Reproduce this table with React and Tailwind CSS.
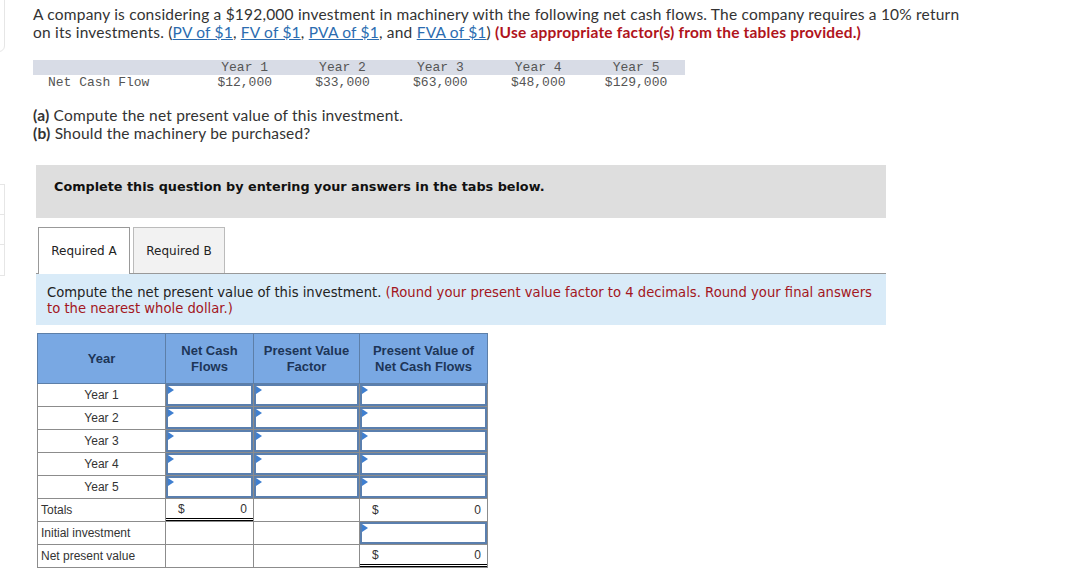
import React from "react";

const sans = { fontFamily: "Lato, 'Open Sans', sans-serif" };
const verdana = { fontFamily: "'DejaVu Sans', Verdana, sans-serif" };
const arial = { fontFamily: "'Liberation Sans', Arial, sans-serif" };
const mono = { fontFamily: "'Liberation Mono', 'Courier New', monospace" };

function Tri() {
  return (
    <span className="absolute left-0 top-0 w-0 h-0 border-t-[4px] border-b-[4px] border-l-[6px] border-t-transparent border-b-transparent border-l-[#3f7fd0]" />
  );
}

function InputCell() {
  return (
    <td className="p-0 border border-[#8c8c8c]">
      <div className="relative h-[22px] border-2 border-[#5a7fae] bg-white">
        <Tri />
      </div>
    </td>
  );
}

function DollarCell({ double }) {
  return (
    <td className="p-0 border border-[#8c8c8c]">
      <div
        className={
          "flex h-[22px] items-center justify-between pl-[12px] pr-[6px] text-[12px] text-[#333] " +
          (double ? "border-b-[3px] border-double border-b-black" : "")
        }
      >
        <span>$</span>
        <span>0</span>
      </div>
    </td>
  );
}

function Cell({ children, className = "" }) {
  return (
    <td className={"p-0 border border-[#8c8c8c] " + className}>
      <div className="h-[22px] flex items-center">{children}</div>
    </td>
  );
}

export default function App() {
  const years = ["Year 1", "Year 2", "Year 3", "Year 4", "Year 5"];
  const flows = ["$12,000", "$33,000", "$63,000", "$48,000", "$129,000"];
  return (
    <div className="relative w-[1070px] h-[573px] overflow-hidden bg-white">
      {/* faint sidebar fragments at left edge */}
      <div className="absolute left-[-10px] top-[-10px] w-[15px] h-[62px] border border-[#e6e6e6] rounded-br-[6px]" />
      <div className="absolute left-[-10px] top-[184px] w-[15px] h-[92px] border border-[#e6e6e6] flex flex-col">
        <div className="h-[30px] border-b border-[#e6e6e6]" />
        <div className="h-[30px] border-b border-[#e6e6e6]" />
        <div className="h-[30px]" />
      </div>

      <div className="pl-[33px] pt-[5px]">
        <p className="text-[15.5px] leading-[18px] text-[#333] tracking-[0.2px]" style={sans}>
          A company is considering a $192,000 investment in machinery with the following net cash flows. The company requires a 10% return
          <br />
          on its investments. (
          <a className="text-[#2b6cb0] underline">PV of $1</a>,{" "}
          <a className="text-[#2b6cb0] underline">FV of $1</a>,{" "}
          <a className="text-[#2b6cb0] underline">PVA of $1</a>, and{" "}
          <a className="text-[#2b6cb0] underline">FVA of $1</a>){" "}
          <span className="font-bold text-[#b0141c]">(Use appropriate factor(s) from the tables provided.)</span>
        </p>

        {/* Net cash flow table */}
        <div className="mt-[19px] w-[652px] text-[13px] text-[#555]" style={mono}>
          <div className="flex h-[15px] items-center bg-[#d8dce6]">
            <div className="w-[163px]" />
            {years.map((y) => (
              <div key={y} className="w-[98px] text-center">{y}</div>
            ))}
          </div>
          <div className="flex h-[15px] items-center pt-[1px]">
            <div className="w-[163px] pl-[15px]">Net Cash Flow</div>
            {flows.map((f) => (
              <div key={f} className="w-[98px] text-center">{f}</div>
            ))}
          </div>
        </div>

        <div className="mt-[17px] text-[15.5px] leading-[17px] text-[#333] tracking-[0.2px]" style={sans}>
          <div><span className="font-bold">(a)</span> Compute the net present value of this investment.</div>
          <div className="mt-[1px]"><span className="font-bold">(b)</span> Should the machinery be purchased?</div>
        </div>

        {/* Instruction box */}
        <div className="mt-[23px] ml-[3px] w-[850px] h-[53px] bg-[#dedede] pl-[18px] pt-[14px]">
          <div className="font-bold text-[12.8px] leading-[16px] text-[#111]" style={verdana}>
            Complete this question by entering your answers in the tabs below.
          </div>
        </div>

        {/* Tabs */}
        <div className="mt-[9px] ml-[5px] flex gap-[3px] h-[46px]" style={verdana}>
          <div className="w-[92px] h-[47px] border border-[#999] border-b-0 bg-white flex items-center justify-center text-[12px] text-[#222] relative z-10">
            Required A
          </div>
          <div className="w-[92px] h-[46px] border border-[#bbb] border-b-0 bg-[#f2f2f2] flex items-center justify-center text-[12px] text-[#222]">
            Required B
          </div>
        </div>

        {/* Blue panel */}
        <div className="ml-[3px] w-[850px] h-[52px] bg-[#d9ebf8] border-t border-[#999] pl-[11px] pr-[8px] pt-[11px] text-[13.2px] leading-[16px] text-[#222]" style={verdana}>
          Compute the net present value of this investment.{" "}
          <span className="text-[#a31621]">
            (Round your present value factor to 4 decimals. Round your final answers to the nearest whole dollar.)
          </span>
        </div>

        {/* NPV table */}
        <table className="mt-[8px] ml-[4px] border-collapse table-fixed w-[450px] text-[12px] text-[#333]" style={arial}>
          <colgroup>
            <col className="w-[128px]" />
            <col className="w-[88px]" />
            <col className="w-[106px]" />
            <col className="w-[128px]" />
          </colgroup>
          <thead>
            <tr className="h-[50px] bg-[#79a8e3] text-[#1d3557] font-bold text-[13px] leading-[16px]">
              <th className="border border-[#5d7fa8] font-bold">Year</th>
              <th className="border border-[#5d7fa8] font-bold">Net Cash<br />Flows</th>
              <th className="border border-[#5d7fa8] font-bold">Present Value<br />Factor</th>
              <th className="border border-[#5d7fa8] font-bold">Present Value of<br />Net Cash Flows</th>
            </tr>
          </thead>
          <tbody>
            {years.map((y) => (
              <tr key={y}>
                <Cell><span className="w-full text-center">{y}</span></Cell>
                <InputCell />
                <InputCell />
                <InputCell />
              </tr>
            ))}
            <tr>
              <Cell><span className="pl-[3px]">Totals</span></Cell>
              <DollarCell double />
              <Cell />
              <DollarCell />
            </tr>
            <tr>
              <Cell><span className="pl-[3px]">Initial investment</span></Cell>
              <Cell />
              <Cell />
              <InputCell />
            </tr>
            <tr>
              <Cell><span className="pl-[3px]">Net present value</span></Cell>
              <Cell />
              <Cell />
              <DollarCell double />
            </tr>
          </tbody>
        </table>
      </div>
    </div>
  );
}
